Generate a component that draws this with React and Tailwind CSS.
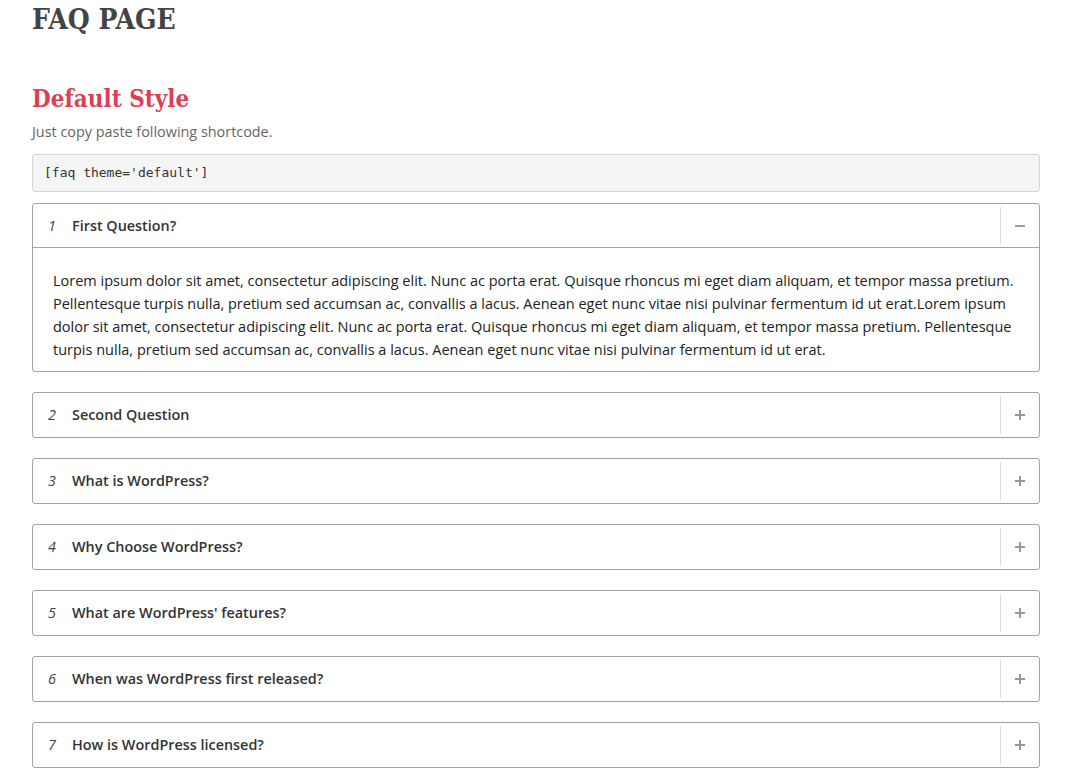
import React, { useState } from 'react';

const faqs = [
  {
    q: 'First Question?',
    a: 'Lorem ipsum dolor sit amet, consectetur adipiscing elit. Nunc ac porta erat. Quisque rhoncus mi eget diam aliquam, et tempor massa pretium. Pellentesque turpis nulla, pretium sed accumsan ac, convallis a lacus. Aenean eget nunc vitae nisi pulvinar fermentum id ut erat.Lorem ipsum dolor sit amet, consectetur adipiscing elit. Nunc ac porta erat. Quisque rhoncus mi eget diam aliquam, et tempor massa pretium. Pellentesque turpis nulla, pretium sed accumsan ac, convallis a lacus. Aenean eget nunc vitae nisi pulvinar fermentum id ut erat.',
  },
  { q: 'Second Question', a: '' },
  { q: 'What is WordPress?', a: '' },
  { q: 'Why Choose WordPress?', a: '' },
  { q: "What are WordPress' features?", a: '' },
  { q: 'When was WordPress first released?', a: '' },
  { q: 'How is WordPress licensed?', a: '' },
];

const FaqItem = ({ index, item, open, onToggle }) => {
  return (
    <div className="mb-[20px] rounded-[3px] border border-[#a3a3a3] bg-white">
      <button
        onClick={onToggle}
        className={`flex h-[44px] w-full items-stretch text-left ${open ? 'border-b border-[#a3a3a3]' : ''}`}
      >
        <span className="flex flex-1 items-center pl-[15px]">
          <span className="w-[24px] text-[14.4px] italic text-[#444]">{index}</span>
          <span className="text-[14.4px] font-semibold text-[#333]">{item.q}</span>
        </span>
        <span className="my-[3px] flex w-[39px] items-center justify-center border-l border-[#dedede]">
          <span className="relative block h-[10px] w-[10px]">
            <span className="absolute left-0 top-[4px] h-[2px] w-[10px] bg-[#999]" />
            {!open && <span className="absolute left-[4px] top-0 h-[10px] w-[2px] bg-[#999]" />}
          </span>
        </span>
      </button>
      {open && (
        <div className="px-[20px] pb-[10px] pt-[21px] text-[14.5px] leading-[23px] text-[#222]">
          {item.a}
        </div>
      )}
    </div>
  );
};

export default function App() {
  const [openIdx, setOpenIdx] = useState(0);
  const slab = { fontFamily: '"DejaVu Serif Condensed", "DejaVu Serif", serif', fontStretch: 'condensed' };

  return (
    <div className="min-h-screen bg-white" style={{ fontFamily: '"Open Sans", sans-serif' }}>
      <div className="ml-[32px] w-[1008px]">
        <h1 className="pt-[4px] text-[28px] font-bold leading-[32px] text-[#444]" style={slab}>
          FAQ PAGE
        </h1>
        <h2 className="mt-[48px] text-[24px] font-bold leading-[30px] text-[#dd3f52]" style={slab}>
          Default Style
        </h2>
        <p className="mt-[8px] text-[14.4px] leading-[20px] text-[#666]">Just copy paste following shortcode.</p>
        <div
          className="mt-[12px] flex h-[38px] items-center rounded-[3px] border border-[#d5d5d5] bg-[#f5f5f5] px-[11px] text-[13px] text-[#333]"
          style={{ fontFamily: '"DejaVu Sans Mono", monospace' }}
        >
          [faq theme='default']
        </div>
        <div className="mt-[11px]">
          {faqs.map((item, i) => (
            <FaqItem
              key={i}
              index={i + 1}
              item={item}
              open={openIdx === i}
              onToggle={() => setOpenIdx(openIdx === i ? -1 : i)}
            />
          ))}
        </div>
      </div>
    </div>
  );
}
